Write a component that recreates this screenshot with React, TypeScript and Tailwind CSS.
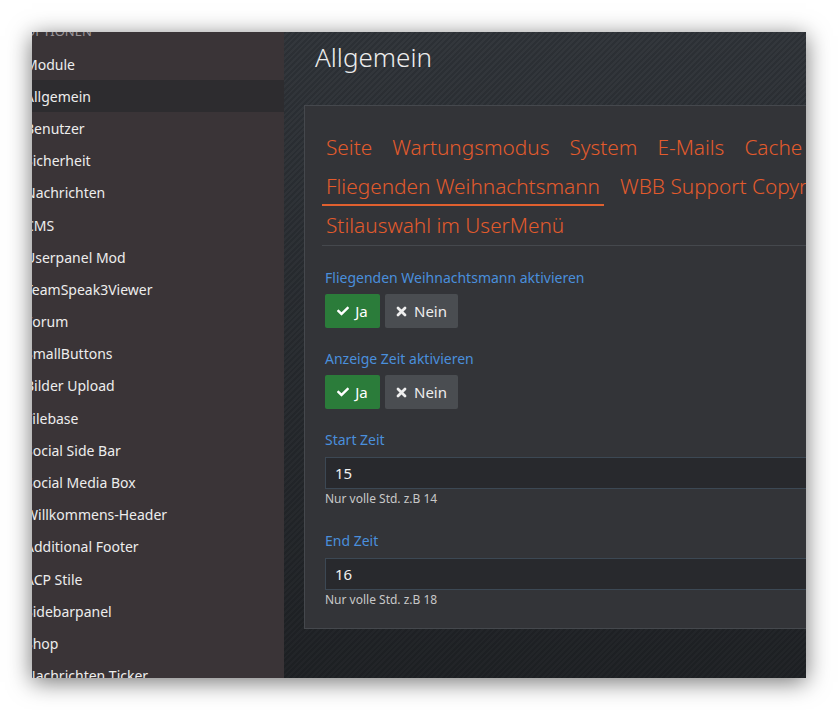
import { FaCheck } from "react-icons/fa";

const menu = [
  "Module",
  "Allgemein",
  "Benutzer",
  "Sicherheit",
  "Nachrichten",
  "CMS",
  "Userpanel Mod",
  "TeamSpeak3Viewer",
  "Forum",
  "SmallButtons",
  "Bilder Upload",
  "Filebase",
  "Social Side Bar",
  "Social Media Box",
  "Willkommens-Header",
  "Additional Footer",
  "ACP Stile",
  "Sidebarpanel",
  "Shop",
  "Nachrichten Ticker",
];

const tabRows = [
  ["Seite", "Wartungsmodus", "System", "E-Mails", "Cache"],
  ["Fliegenden Weihnachtsmann", "WBB Support Copyright"],
  ["Stilauswahl im UserMenü"],
];

function TimesIcon() {
  return (
    <svg width="11" height="11" viewBox="0 0 11 11" className="flex-none">
      <path d="M2 2 L9 9 M9 2 L2 9" stroke="currentColor" strokeWidth="2.8" strokeLinecap="round" />
    </svg>
  );
}

function Toggle({ label }: { label: string }) {
  return (
    <div>
      <div className="text-[14px] leading-[20px] text-[#4a8fdc]">{label}</div>
      <div className="mt-[6px] flex gap-[5px]">
        <button className="flex h-[34px] w-[55px] items-center justify-center gap-[6px] rounded-[2px] bg-[#2b7c3a] text-[15px] text-white">
          <FaCheck className="text-[12px]" />
          Ja
        </button>
        <button className="flex h-[34px] w-[73px] items-center justify-center gap-[7px] rounded-[2px] bg-[#4a4d51] text-[15px] text-[#eeeeee]">
          <TimesIcon />
          Nein
        </button>
      </div>
    </div>
  );
}

function TimeField({ label, value, hint }: { label: string; value: string; hint: string }) {
  return (
    <div>
      <div className="text-[14px] leading-[20px] text-[#4a8fdc]">{label}</div>
      <div className="mt-[7px] flex h-[32px] items-center border border-[#3c4854] bg-[#28292d] pl-[9px] text-[15px] text-[#f0f0f0]">
        {value}
      </div>
      <div className="mt-[2px] text-[12px] leading-[16px] text-[#c8c8c8]">{hint}</div>
    </div>
  );
}

export default function App() {
  return (
    <div className="h-[710px] w-[838px] bg-white p-[32px] font-['Noto_Sans',sans-serif]">
      <div className="flex h-[646px] w-[774px] overflow-hidden shadow-[0_4px_22px_rgba(0,0,0,0.55)]">
        {/* Sidebar */}
        <div className="w-[252px] flex-none overflow-hidden bg-[#3a3437]">
          <div className="-ml-[7px] -mt-[16px]">
            <div className="flex h-[32px] items-center text-[13px] uppercase text-[#9a9598]">
              Optionen
            </div>
            {menu.map((item) => (
              <div
                key={item}
                className={
                  item === "Allgemein"
                    ? "flex h-[32.2px] items-center whitespace-nowrap bg-[#2d2c2f] text-[14px] text-[#ededed]"
                    : "flex h-[32.2px] items-center whitespace-nowrap text-[14px] text-[#ededed]"
                }
              >
                {item}
              </div>
            ))}
          </div>
        </div>

        {/* Main */}
        <div className="flex-1 overflow-hidden bg-[linear-gradient(to_bottom,rgba(0,0,0,0)_0%,rgba(0,0,0,0.35)_100%),repeating-linear-gradient(135deg,#2c3035_0px,#2c3035_2px,#33373c_2px,#33373c_4px)] pl-[20px] pt-[8px]">
          <h1 className="pl-[11px] text-[26px] font-light leading-[34px] text-[#ececec]">Allgemein</h1>

          <div className="mt-[31px] h-[524px] w-[620px] border border-[#45484d] bg-[#333438] px-[20px] pt-[22px]">
            <div className="-ml-[3px] border-b border-[#45484d]">
              {tabRows.map((row, i) => (
                <div key={i} className="flex h-[39px] gap-x-[12px] whitespace-nowrap">
                  {row.map((tab) => (
                    <span
                      key={tab}
                      className={
                        tab === "Fliegenden Weihnachtsmann"
                          ? "flex items-center border-b-2 border-[#e0602f] px-[4px] pt-[2px] text-[20.8px] font-light text-[#e35b2c]"
                          : "flex items-center px-[4px] text-[20.8px] font-light text-[#e35b2c]"
                      }
                    >
                      {tab}
                    </span>
                  ))}
                </div>
              ))}
            </div>

            <div className="mt-[22px]">
              <Toggle label="Fliegenden Weihnachtsmann aktivieren" />
            </div>
            <div className="mt-[21px]">
              <Toggle label="Anzeige Zeit aktivieren" />
            </div>
            <div className="mt-[21px]">
              <TimeField label="Start Zeit" value="15" hint="Nur volle Std. z.B 14" />
            </div>
            <div className="mt-[24px]">
              <TimeField label="End Zeit" value="16" hint="Nur volle Std. z.B 18" />
            </div>
          </div>
        </div>
      </div>
    </div>
  );
}
